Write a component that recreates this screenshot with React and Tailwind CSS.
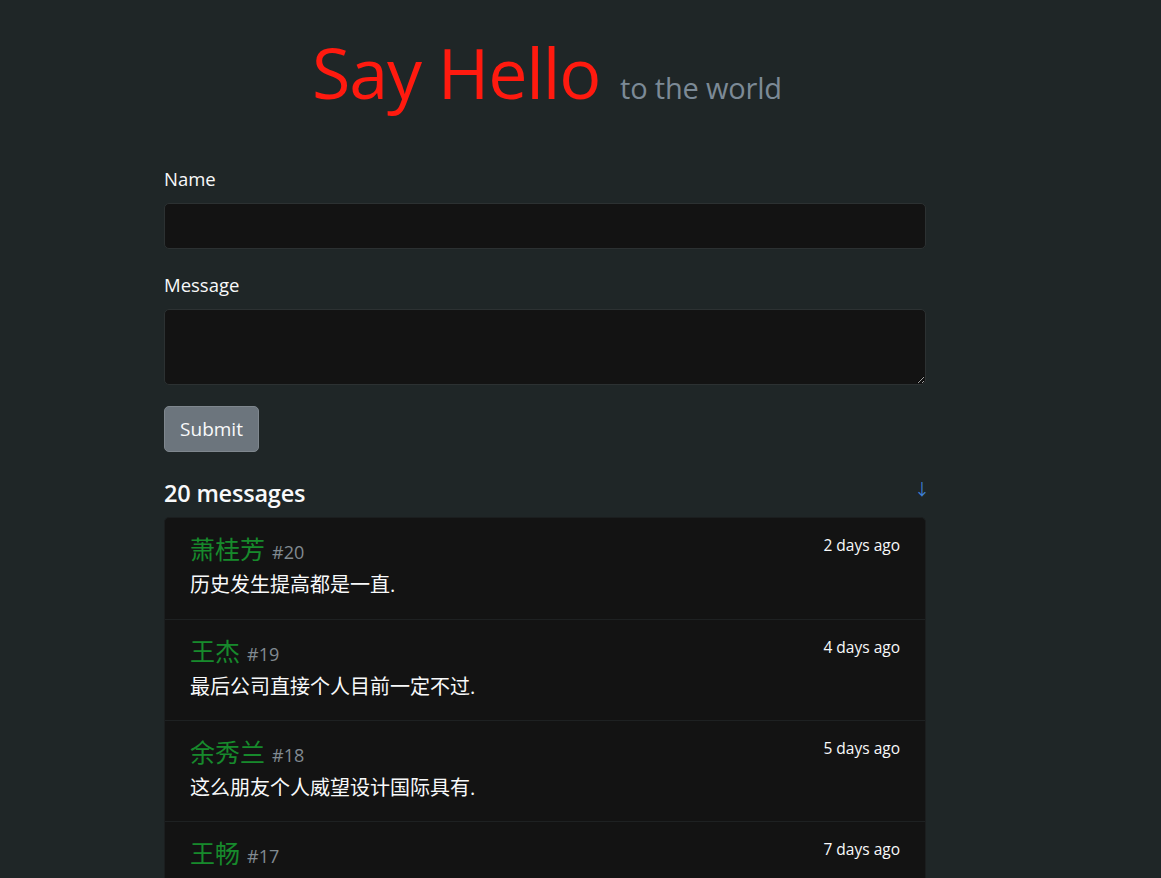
import React from 'react';

const messages = [
  { id: 20, name: '萧桂芳', body: '历史发生提高都是一直.', time: '2 days ago' },
  { id: 19, name: '王杰', body: '最后公司直接个人目前一定不过.', time: '4 days ago' },
  { id: 18, name: '余秀兰', body: '这么朋友个人威望设计国际具有.', time: '5 days ago' },
  { id: 17, name: '王畅', body: '不过一直.', time: '7 days ago' },
];

const font = { fontFamily: '"Open Sans", "Noto Sans CJK SC", sans-serif' };

export default function App() {
  return (
    <div className="h-[878px] overflow-hidden bg-[#1f2627] text-[#f8f9fa]" style={font}>
      <div className="w-[762px] ml-[164px]">
        {/* Header */}
        <h1 className="pt-[24px] pl-[148px] pb-[46px] flex items-baseline gap-[20px]">
          <span className="text-[#ff1a0f] text-[70px] leading-[96px] font-normal tracking-[-1.2px]">Say Hello</span>
          <span className="text-[#7c8a96] text-[29px] font-normal tracking-[-0.2px]">to the world</span>
        </h1>

        {/* Form */}
        <form className="flex flex-col">
          <label className="text-[18.5px] leading-[26px] mb-[11px]">Name</label>
          <input className="h-[46px] bg-[#131313] border border-[#2c3132] rounded-[5px] px-3 outline-none mb-[23px]" />
          <label className="text-[18.5px] leading-[26px] mb-[11px]">Message</label>
          <textarea className="h-[76px] bg-[#131313] border border-[#2c3132] rounded-[5px] px-3 outline-none mb-[21px]" />
          <div>
            <button type="button" className="h-[46px] w-[95px] bg-[#6c757d] border border-[#7f878e] rounded-[5px] text-[19px]">
              Submit
            </button>
          </div>
        </form>

        {/* Messages */}
        <div className="mt-[23px] flex items-end justify-between mb-[6px]">
          <h4 className="text-[23.5px] font-semibold leading-[36px] tracking-[-0.2px]">20 messages</h4>
          <span className="text-[#3d7fd6] text-[16px] mr-[-4px] mb-[10px]">↓</span>
        </div>
        <ul className="bg-[#131313] border border-[#1b1e1f] rounded-t-[5px]">
          {messages.map((m, i) => (
            <li key={m.id} className={`h-[101px] pl-[25px] pr-[25px] pt-[14px] ${i > 0 ? 'border-t border-[#1e2122]' : ''}`}>
              <div className="flex justify-between items-start">
                <div className="flex items-baseline gap-[7px]">
                  <span className="text-[#178a2c] text-[25px] leading-[34px]">{m.name}</span>
                  <span className="text-[#818a91] text-[18px]">#{m.id}</span>
                </div>
                <span className="text-[15.5px] mt-[2px]">{m.time}</span>
              </div>
              <p className="text-[20px] leading-[28px] mt-[5px]">{m.body}</p>
            </li>
          ))}
        </ul>
      </div>
    </div>
  );
}
